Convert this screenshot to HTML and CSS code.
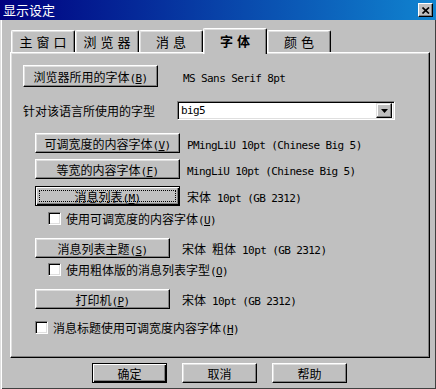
FILE: index.html
```html
<!DOCTYPE html>
<html lang="zh-CN">
<head>
    <meta charset="UTF-8">
    <title>显示设定</title>
    <link rel="stylesheet" href="styles.css">
</head>
<body>
<div class="dialog">
    <div class="titlebar">
        <span class="title">显示设定</span>
        <span class="close">
            <svg width="8" height="7" viewBox="0 0 8 7"><path d="M0.5 0.5 L7 6.5 M7 0.5 L0.5 6.5" stroke="#000" stroke-width="1.7" fill="none"/></svg>
        </span>
    </div>

    <div class="tabs">
        <div class="tab">主窗口</div>
        <div class="tab">浏览器</div>
        <div class="tab">消息</div>
        <div class="tab active">字体</div>
        <div class="tab">颜色</div>
    </div>

    <div class="panel">
        <div class="row r1">
            <button class="btn w135">浏览器所用的字体<span class="lat">(<u>B</u>)</span></button>
            <span class="info wide"><span class="lat">MS Sans Serif 8pt</span></span>
        </div>

        <div class="row r2">
            <span class="label">针对该语言所使用的字型</span>
            <div class="select">
                <span class="lat value">big5</span>
                <span class="drop">
                    <svg width="7" height="4" viewBox="0 0 7 4"><polygon points="0,0 7,0 3.5,4" fill="#000"/></svg>
                </span>
            </div>
        </div>

        <div class="row indent r3">
            <button class="btn w145">可调宽度的内容字体<span class="lat">(<u>V</u>)</span></button>
            <span class="info near"><span class="lat">PMingLiU 10pt (Chinese Big 5)</span></span>
        </div>
        <div class="row indent r4">
            <button class="btn w145">等宽的内容字体<span class="lat">(<u>F</u>)</span></button>
            <span class="info near"><span class="lat">MingLiU 10pt (Chinese Big 5)</span></span>
        </div>
        <div class="row indent r5">
            <button class="btn w145 focus">消息列表<span class="lat">(<u>M</u>)</span></button>
            <span class="info near">宋体<span class="lat"> 10pt (GB 2312)</span></span>
        </div>
        <div class="check sub c1">
            <span class="box"></span>
            <span>使用可调宽度的内容字体<span class="lat">(<u>U</u>)</span></span>
        </div>

        <div class="row indent r6">
            <button class="btn w135">消息列表主题<span class="lat">(<u>S</u>)</span></button>
            <span class="info">宋体<span class="lat"> </span>粗体<span class="lat"> 10pt (GB 2312)</span></span>
        </div>
        <div class="check sub c2">
            <span class="box"></span>
            <span>使用粗体版的消息列表字型<span class="lat">(<u>O</u>)</span></span>
        </div>

        <div class="row indent r7">
            <button class="btn w135">打印机<span class="lat">(<u>P</u>)</span></button>
            <span class="info">宋体<span class="lat"> 10pt (GB 2312)</span></span>
        </div>
        <div class="check indent c3">
            <span class="box"></span>
            <span>消息标题使用可调宽度内容字体<span class="lat">(<u>H</u>)</span></span>
        </div>
    </div>

    <div class="actions">
        <button class="btn w75 default">确定</button>
        <button class="btn w75">取消</button>
        <button class="btn w75">帮助</button>
    </div>
</div>
</body>
</html>
```

FILE: styles.css
```css
*{
    margin: 0;
    padding: 0;
    box-sizing: border-box;
}
body{
    font-family: "Noto Sans CJK SC", sans-serif;
    font-size: 12px;
    color: #000;
    background: #c0c0c0;
}
.dialog{
    width: 436px;
    height: 389px;
    background: #c0c0c0;
    box-shadow: inset 1px 0 #dfdfdf, inset 2px 0 #fff, inset -1px -1px #404040;
}

/* 标题栏 */
.titlebar{
    height: 20px;
    display: flex;
    align-items: center;
    justify-content: space-between;
    background: linear-gradient(to right, #000080, #1084d0);
    padding: 0 3px 0 3px;
}
.title{
    color: #fff;
    font-size: 13px;
    line-height: 20px;
}
.close{
    width: 15px;
    height: 14px;
    display: flex;
    align-items: center;
    justify-content: center;
    background: #c0c0c0;
    border: 1px solid;
    border-color: #fff #000 #000 #fff;
    box-shadow: inset -1px -1px #808080;
}

/* 选项卡 */
.tabs{
    height: 32px;
    display: flex;
    align-items: flex-end;
    padding-left: 11px;
}
.tab{
    width: 64px;
    height: 22px;
    display: flex;
    align-items: center;
    justify-content: center;
    font-size: 13px;
    letter-spacing: 4px;
    text-indent: 4px;
    border-top: 1px solid #fff;
    border-left: 1px solid #fff;
    border-right: 1px solid #000;
    border-radius: 2px 2px 0 0;
    box-shadow: inset -1px 0 #808080, inset 1px 1px #dfdfdf;
}
.tab.active{
    height: 26px;
    margin-bottom: -2px;
    padding-bottom: 3px;
    font-weight: bold;
    background: #c0c0c0;
    position: relative;
    z-index: 1;
}

/* 主面板 */
.panel{
    height: 306px;
    margin: 0 6px 0 10px;
    padding: 12px 11px 0 12px;
    border: 1px solid;
    border-color: #fff #000 #000 #fff;
    box-shadow: inset -1px -1px #808080, inset 1px 1px #dfdfdf;
}
.row{
    display: flex;
    align-items: center;
}
.indent{
    padding-left: 12px;
}
.sub{
    padding-left: 25px;
}
.r2{ margin-top: 14px; }
.r3{ margin-top: 13px; }
.r4{ margin-top: 6px; }
.r5{ margin-top: 7px; }
.c1{ margin-top: 6px; }
.r6{ margin-top: 13px; }
.c2{ margin-top: 5px; }
.r7{ margin-top: 13px; }
.c3{ margin-top: 12px; }

.lat{
    font-family: "DejaVu Sans Mono", monospace;
    font-size: 11px;
    letter-spacing: -0.6px;
}
.info{
    margin-left: 12px;
    white-space: nowrap;
}
.info.wide{ margin-left: 25px; }
.info.near{ margin-left: 7px; }

/* 按钮 */
.btn{
    height: 20px;
    font-family: inherit;
    font-size: 12px;
    color: #000;
    background: #c0c0c0;
    border: 1px solid;
    border-color: #fff #000 #000 #fff;
    box-shadow: inset -1px -1px #808080, inset 1px 1px #dfdfdf;
    white-space: nowrap;
}
.r1 .btn{ height: 22px; }
.w135{ width: 135px; }
.w145{ width: 145px; }
.w75{ width: 75px; }
.btn.focus,
.btn.default{
    border-color: #000;
    box-shadow: inset 1px 1px #fff, inset -1px -1px #000, inset -2px -2px #808080;
}
.btn.focus{
    outline: 1px dotted #000;
    outline-offset: -5px;
}

/* 下拉框 */
.label{
    width: 154px;
    white-space: nowrap;
}
.select{
    width: 218px;
    height: 19px;
    display: flex;
    align-items: center;
    justify-content: space-between;
    background: #fff;
    border: 1px solid;
    border-color: #808080 #fff #fff #808080;
    box-shadow: inset 1px 1px #000, inset -1px -1px #dfdfdf;
    padding: 2px 2px 2px 3px;
}
.drop{
    width: 16px;
    height: 15px;
    display: flex;
    align-items: center;
    justify-content: center;
    background: #c0c0c0;
    border: 1px solid;
    border-color: #dfdfdf #000 #000 #dfdfdf;
    box-shadow: inset -1px -1px #808080, inset 1px 1px #fff;
}

/* 复选框 */
.check{
    height: 13px;
    display: flex;
    align-items: center;
    gap: 5px;
    white-space: nowrap;
}
.box{
    width: 13px;
    height: 13px;
    flex: none;
    background: #fff;
    border: 1px solid;
    border-color: #808080 #fff #fff #808080;
    box-shadow: inset 1px 1px #000, inset -1px -1px #dfdfdf;
}

/* 底部按钮 */
.actions{
    display: flex;
    justify-content: center;
    gap: 15px;
    margin-top: 5px;
    padding-left: 3px;
}
```
